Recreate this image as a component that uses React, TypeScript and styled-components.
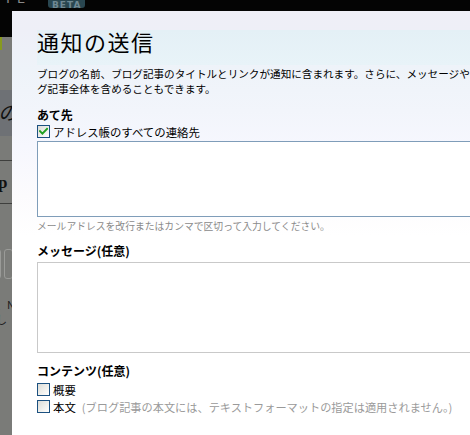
import React from 'react';
import styled, { createGlobalStyle } from 'styled-components';

const Global = createGlobalStyle`
  html, body { margin: 0; padding: 0; width: 470px; height: 435px; overflow: hidden; background: #7a7b78; }
  #root { width: 470px; height: 435px; position: relative; overflow: hidden; }
`;

/* ---------- dimmed page behind the dialog ---------- */
const Backdrop = styled.div`
  width: 470px;
  height: 435px;
  display: flex;
  flex-direction: column;
  background: #7a7b78;
  overflow: hidden;
`;

const TopBar = styled.header`
  height: 37px;
  flex-shrink: 0;
  background: #040404;
  display: flex;
  align-items: flex-start;
  gap: 18px;
  padding-left: 4px;
  overflow: hidden;
`;

const Brand = styled.span`
  font-family: "DejaVu Sans", sans-serif;
  font-size: 13px;
  line-height: 13px;
  color: #8a8a8a;
  margin-top: -8px;
  letter-spacing: 5px;
`;

const Badge = styled.span`
  width: 37px;
  height: 8px;
  box-sizing: border-box;
  background: #294650;
  color: #6f8893;
  border-radius: 0 0 3px 3px;
  font: bold 9px/6px "DejaVu Sans", sans-serif;
  letter-spacing: 1px;
  overflow: hidden;
  display: flex;
  align-items: flex-end;
  justify-content: center;
`;

const GreenMark = styled.div`
  width: 2px;
  height: 13px;
  flex-shrink: 0;
  background: #879a1e;
`;

const PageBand = styled.div<{ $h: number; $bg: string }>`
  height: ${p => p.$h}px;
  flex-shrink: 0;
  background: ${p => p.$bg};
  display: flex;
  align-items: center;
  overflow: hidden;
`;

const SerifGlyph = styled.span<{ $italic?: boolean; $size: number }>`
  font-family: "Liberation Serif", "Noto Sans CJK JP", serif;
  font-size: ${p => p.$size}px;
  font-style: ${p => (p.$italic ? 'italic' : 'normal')};
  font-weight: ${p => (p.$italic ? 'normal' : 'bold')};
  color: #111;
  line-height: 1;
  margin-left: -2px;
`;

const Rule = styled.div`
  height: 1px;
  flex-shrink: 0;
  background: #3e3f3d;
`;

const ButtonRow = styled.div`
  display: flex;
  flex-shrink: 0;
  gap: 3px;
  height: 30px;
  margin-left: -8px;
`;

const GhostButton = styled.div`
  width: 9px;
  box-sizing: border-box;
  border: 1px solid #9a9b98;
  border-radius: 3px;
`;

const SmallText = styled.div`
  font-family: "Noto Sans CJK JP", sans-serif;
  font-size: 11px;
  line-height: 15px;
  height: 15px;
  flex-shrink: 0;
  color: #1a1a1a;
  white-space: nowrap;
  margin-left: -4px;
`;

/* ---------- the dialog ---------- */
const Dialog = styled.section`
  position: absolute;
  left: 12px;
  top: 11px;
  width: 640px;
  height: 460px;
  box-sizing: border-box;
  padding: 19px 0 0 25px;
  background: linear-gradient(
    to bottom,
    #efeff7 0px,
    #eeeff7 19px,
    #eef3f9 58px,
    #f2f5fb 100px,
    #f6f7fe 135px,
    #fcfbfd 185px,
    #ffffff 225px
  );
  font-family: "Noto Sans CJK JP", sans-serif;
  color: #000;
`;

const Title = styled.h1`
  margin: 0;
  height: 35px;
  font-size: 22px;
  font-weight: normal;
  letter-spacing: 1.5px;
  line-height: 23px;
  background: linear-gradient(to bottom, #e4f0f6, #e8f3f8);
  white-space: nowrap;
`;

const Description = styled.p`
  margin: 1px 0 0;
  font-size: 10.6px;
  line-height: 15px;
  white-space: nowrap;
`;

const SectionLabel = styled.h2<{ $gap: number }>`
  margin: ${p => p.$gap}px 0 0;
  font-size: 12px;
  font-weight: bold;
  line-height: 15px;
`;

const CheckRow = styled.label<{ $h: number; $top?: number }>`
  display: flex;
  align-items: center;
  gap: 3px;
  height: ${p => p.$h}px;
  margin-top: ${p => p.$top ?? 0}px;
  font-size: 11.4px;
  white-space: nowrap;
`;

const Box = styled.span`
  width: 13px;
  height: 13px;
  box-sizing: border-box;
  border: 1px solid #1c5180;
  background: linear-gradient(135deg, #dcdcd7 0%, #f0f0ec 55%, #ffffff 100%);
  display: flex;
  align-items: center;
  justify-content: center;
  flex-shrink: 0;
`;

const Note = styled.span`
  color: #9a9a9a;
  font-size: 11.2px;
  margin-left: 3px;
`;

const Field = styled.textarea<{ $h: number; $border: string; $top: number }>`
  display: block;
  box-sizing: border-box;
  width: 600px;
  height: ${p => p.$h}px;
  margin: ${p => p.$top}px 0 0;
  border: 1px solid ${p => p.$border};
  background: #fff;
  resize: none;
  outline: none;
  padding: 2px;
  font-family: "Noto Sans CJK JP", sans-serif;
`;

const Hint = styled.div`
  margin-top: 3px;
  font-size: 9.8px;
  line-height: 12px;
  color: #8a8a8a;
  white-space: nowrap;
`;

const Check = () => (
  <svg width="9" height="9" viewBox="0 0 9 9">
    <path d="M1 4.2 L3.4 6.6 L8 1.8" fill="none" stroke="#21a121" strokeWidth="2" strokeLinecap="square" />
  </svg>
);

const Checkbox = ({ checked }: { checked?: boolean }) => <Box>{checked ? <Check /> : null}</Box>;

export default function App() {
  return (
    <>
      <Global />
      <Backdrop>
        <TopBar>
          <Brand>TE</Brand>
          <Badge>BETA</Badge>
        </TopBar>
        <GreenMark />
        <PageBand $h={40} $bg="#7a7b78" />
        <PageBand $h={46} $bg="#6e7175">
          <SerifGlyph $italic $size={20}>の</SerifGlyph>
        </PageBand>
        <PageBand $h={24} $bg="#7a7b78" />
        <Rule />
        <PageBand $h={42} $bg="#7a7b78">
          <SerifGlyph $size={17}>p</SerifGlyph>
        </PageBand>
        <Rule />
        <PageBand $h={45} $bg="#7a7b78" />
        <ButtonRow>
          <GhostButton />
          <GhostButton />
        </ButtonRow>
        <PageBand $h={18} $bg="#7a7b78" />
        <SmallText>、N</SmallText>
        <SmallText>し</SmallText>
      </Backdrop>

      <Dialog>
        <Title>通知の送信</Title>
        <Description>
          ブログの名前、ブログ記事のタイトルとリンクが通知に含まれます。さらに、メッセージやブロ
          <br />
          グ記事全体を含めることもできます。
        </Description>

        <SectionLabel $gap={11}>あて先</SectionLabel>
        <CheckRow $h={15} $top={2}>
          <Checkbox checked />
          アドレス帳のすべての連絡先
        </CheckRow>
        <Field $h={76} $border="#7f9db9" $top={2} readOnly />
        <Hint>メールアドレスを改行またはカンマで区切って入力してください。</Hint>

        <SectionLabel $gap={11}>メッセージ(任意)</SectionLabel>
        <Field $h={91} $border="#c9c9c9" $top={4} readOnly />

        <SectionLabel $gap={10}>コンテンツ(任意)</SectionLabel>
        <CheckRow $h={17} $top={3}>
          <Checkbox />
          概要
        </CheckRow>
        <CheckRow $h={17}>
          <Checkbox />
          本文
          <Note>(ブログ記事の本文には、テキストフォーマットの指定は適用されません。)</Note>
        </CheckRow>
      </Dialog>
    </>
  );
}
